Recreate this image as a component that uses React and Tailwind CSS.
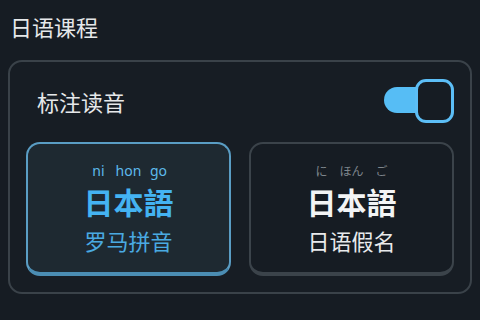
import { useState } from "react";

const cjk = { fontFamily: '"Noto Sans CJK SC", "Noto Sans", sans-serif' };

function RubyWord({ parts, rubyClass, kanjiClass }) {
  return (
    <div className="flex">
      {parts.map(([ruby, kanji], i) => (
        <div key={i} className="flex w-[30px] flex-col items-center">
          <span className={`whitespace-nowrap leading-[17px] ${rubyClass}`}>{ruby}</span>
          <span className={`mt-[4px] text-[30px] font-bold leading-[36px] ${kanjiClass}`}>{kanji}</span>
        </div>
      ))}
    </div>
  );
}

export default function App() {
  const [mode, setMode] = useState("romaji");
  const [on, setOn] = useState(true);

  return (
    <div className="h-[320px] w-[480px] bg-[#161c23] px-[8px] pt-[10px]" style={cjk}>
      <h1 className="pl-[2px] text-[22px] leading-[32px] text-[#e6e8ea]">日语课程</h1>

      <div className="mt-[18px] rounded-[14px] border-2 border-[#3a4249] bg-[#171d24] px-[16px] pb-[16px] pt-[17px]">
        {/* 标注读音 row */}
        <div className="flex items-center justify-between pl-[11px]">
          <span className="text-[22px] leading-[30px] text-[#e6e8ea]">标注读音</span>
          <button className="relative h-[44px] w-[70px]" onClick={() => setOn(!on)}>
            <span className="absolute left-0 top-[8px] h-[26px] w-[50px] rounded-full bg-[#56bdf5]" />
            <span className="absolute right-0 top-0 h-[44px] w-[39px] rounded-[11px] border-[3px] border-[#5cbef6] bg-[#161c23]" />
          </button>
        </div>

        {/* cards */}
        <div className="mt-[19px] grid grid-cols-2 gap-[18px]">
          <button
            onClick={() => setMode("romaji")}
            className="flex h-[134px] flex-col items-center justify-center rounded-[14px] border-2 border-b-4 border-[#5a9dc4] border-b-[#4b8db3] bg-[#1e2931]"
          >
            <RubyWord
              parts={[["ni", "日"], ["hon", "本"], ["go", "語"]]}
              rubyClass="font-['Noto_Sans',sans-serif] text-[14px] text-[#5db9ec]"
              kanjiClass="text-[#44b3f2]"
            />
            <span className="mt-[7px] text-[22px] leading-[28px] text-[#4aaae2]">罗马拼音</span>
          </button>

          <button
            onClick={() => setMode("kana")}
            className="flex h-[134px] flex-col items-center justify-center rounded-[14px] border-2 border-b-4 border-[#3b434a] bg-[#161c23]"
          >
            <RubyWord
              parts={[["に", "日"], ["ほん", "本"], ["ご", "語"]]}
              rubyClass="text-[12px] text-[#7f868d]"
              kanjiClass="text-[#f2f4f5]"
            />
            <span className="mt-[7px] text-[22px] leading-[28px] text-[#e8eaec]">日语假名</span>
          </button>
        </div>
      </div>
    </div>
  );
}
